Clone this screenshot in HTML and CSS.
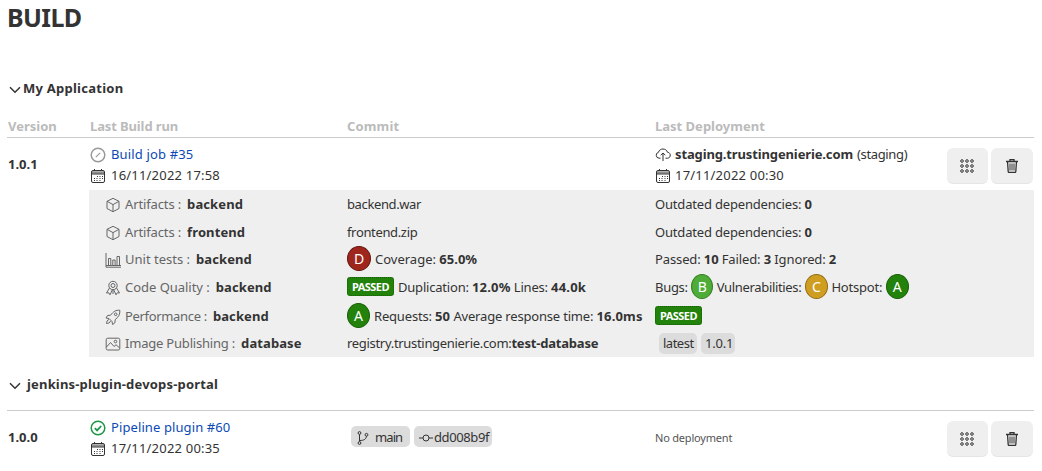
FILE: index.html
```html
<!DOCTYPE html>
<html lang="en">
<head>
<meta charset="utf-8">
<title>Build</title>
<link rel="stylesheet" href="styles.css">
</head>
<body>
<svg class="sprite" aria-hidden="true">
  <symbol id="chevron" viewBox="0 0 12 8"><path d="M1 1.2l5 5 5-5" stroke-width="1.5"/></symbol>
  <symbol id="calendar" viewBox="0 0 16 16"><rect x="1.500" y="2.500" width="13" height="12" rx="1.500"/><path d="M2 4.500h12" stroke-width="2.400" opacity=".55"/><path d="M4.500 1v2M11.500 1v2M1.500 6h13"/><path d="M7 8.500h1M9.500 8.500h1M12 8.500h1M4 10.500h1M6.500 10.500h1M9.500 10.500h1M12 10.500h1M4 12.500h1M6.500 12.500h1M9.500 12.500h1" stroke-width="1.100"/></symbol>
  <symbol id="pending" viewBox="0 0 16 16"><circle cx="8" cy="8" r="6.800" stroke-width="1.500"/><path d="M5.800 10.200l4.400-4.400" stroke-width="1.200"/></symbol>
  <symbol id="success" viewBox="0 0 16 16"><circle cx="8" cy="8" r="6.800" stroke-width="1.500"/><path d="M4.800 8.200l2.300 2.200 4.100-4.400" stroke-width="1.800"/></symbol>
  <symbol id="cube" viewBox="0 0 16 16"><path d="M8 1.300l6 3v7.200l-6 3.200-6-3.200V4.300zM2 4.300l6 3.300 6-3.300M8 7.600v7"/></symbol>
  <symbol id="chart" viewBox="0 0 16 16"><path d="M1 1v14.200h15M1 13.500h15" /><path d="M3.500 13V6.500h2.300V13M7.800 13V8h2.300v5M12 13V4.500h2.500V13"/></symbol>
  <symbol id="award" viewBox="0 0 16 16"><circle cx="8" cy="5.500" r="4.200"/><circle cx="8" cy="5.500" r="2"/><path d="M4.500 8l-3 5 2.300-.2 1.200 2 2.300-5M11.500 8l3 5-2.300-.2-1.200 2-2.300-5M8 10v4"/></symbol>
  <symbol id="rocket" viewBox="0 0 16 16"><path d="M14.800 1.200c-4-.2-6.500 1.300-9.200 5L2.500 6.500 1 9l3 .5L7 12.500l.6 3 2.300-1.700.3-3.200c3.500-2.700 5-5.400 4.600-9.400zM4 10.500c-2 .5-2.200 2.200-2.500 4 2-.2 3.600-.7 4-2.500"/><circle cx="10.700" cy="5.300" r="1.300"/></symbol>
  <symbol id="image" viewBox="0 0 16 16"><rect x="1.200" y="2.200" width="13.600" height="11.800" rx="1.500"/><path d="M1.500 11l4-4.500 3.500 4 2-1.800 3.600 3.300"/><circle cx="10.500" cy="5.500" r="1.300"/></symbol>
  <symbol id="cloud" viewBox="0 0 16 14"><path d="M5.500 10.200H4A3 3 0 0 1 3.500 4.300C4 2 6 1 8 1s4 1.200 4.400 3.200c3.800.1 3.800 6 .1 6h-2M8 13V5M5.700 7.200L8 5l2.300 2.200"/></symbol>
  <symbol id="grid" viewBox="0 0 14 14"><circle cx="2" cy="2" r="1.300"/><circle cx="7" cy="2" r="1.300"/><circle cx="12" cy="2" r="1.300"/><circle cx="2" cy="7" r="1.300"/><circle cx="7" cy="7" r="1.300"/><circle cx="12" cy="7" r="1.300"/><circle cx="2" cy="12" r="1.300"/><circle cx="7" cy="12" r="1.300"/><circle cx="12" cy="12" r="1.300"/></symbol>
  <symbol id="trash" viewBox="0 0 12 14"><path d="M0 2.500h12M4 2V.7h4V2M1.500 2.500l.7 10q.1 1 1 1h5.600q.9 0 1-1l.7-10" stroke-width="1.300"/><path d="M4 4.500v7M6 4.500v7M8 4.500v7" stroke-width="1"/></symbol>
  <symbol id="branch" viewBox="0 0 12 14"><circle cx="2.500" cy="2" r="1.400"/><circle cx="2.500" cy="12" r="1.400"/><circle cx="9.500" cy="3.800" r="1.400"/><path d="M2.500 3.500v7M2.500 9.500c5 0 6.500-1.500 7-4.200"/></symbol>
  <symbol id="commit" viewBox="0 0 14 10"><circle cx="7" cy="5" r="3"/><path d="M0 5h4M10 5h4"/></symbol>
</svg>
<main class="page">
  <h1 class="title">BUILD</h1>

  <section class="app">
    <h2 class="app-name"><svg class="chevron"><use href="#chevron"/></svg><span class="t-app">My Application</span></h2>
    <div class="columns head">
      <span class="h-version">Version</span><span class="h-build">Last Build run</span><span class="h-commit">Commit</span><span class="h-deploy">Last Deployment</span>
    </div>
    <div class="columns run">
      <b class="version">1.0.1</b>
      <div class="lines">
        <div class="line"><svg class="icon pending"><use href="#pending"/></svg><a class="link t-job">Build job #35</a></div>
        <div class="line"><svg class="icon"><use href="#calendar"/></svg><span class="date">16/11/2022 17:58</span></div>
      </div>
      <div></div>
      <div class="lines deploy">
        <div class="line"><svg class="icon cloud"><use href="#cloud"/></svg><b class="t-host">staging.trustingenierie.com</b><span class="t-env">(staging)</span></div>
        <div class="line"><svg class="icon"><use href="#calendar"/></svg><span class="date">17/11/2022 00:30</span></div>
      </div>
      <div class="actions"><button class="button"><svg class="grid"><use href="#grid"/></svg></button><button class="button"><svg class="trash"><use href="#trash"/></svg></button></div>
    </div>
    <div class="details">
      <div class="detail">
        <div class="kind"><svg class="icon"><use href="#cube"/></svg><span class="t-art">Artifacts :</span><b class="t-name">backend</b></div>
        <div class="cell t-war">backend.war</div>
        <div class="cell"><span class="t-out">Outdated dependencies: <b>0</b></span></div>
      </div>
      <div class="detail">
        <div class="kind"><svg class="icon"><use href="#cube"/></svg><span class="t-art">Artifacts :</span><b class="t-name">frontend</b></div>
        <div class="cell t-zip">frontend.zip</div>
        <div class="cell"><span class="t-out">Outdated dependencies: <b>0</b></span></div>
      </div>
      <div class="detail tests">
        <div class="kind"><svg class="icon"><use href="#chart"/></svg><span class="t-unit">Unit tests :</span><b class="t-name">backend</b></div>
        <div class="cell"><i class="grade grade-d">D</i><span class="t-cov">Coverage: <b>65.0%</b></span></div>
        <div class="cell"><span class="t-tests">Passed: <b>10</b> Failed: <b>3</b> Ignored: <b>2</b></span></div>
      </div>
      <div class="detail quality">
        <div class="kind"><svg class="icon"><use href="#award"/></svg><span class="t-quality">Code Quality :</span><b class="t-name">backend</b></div>
        <div class="cell"><span class="passed">PASSED</span><span class="t-dup">Duplication: <b>12.0%</b> Lines: <b>44.0k</b></span></div>
        <div class="cell ratings"><span class="t-bugs">Bugs:</span><i class="grade grade-b">B</i><span class="t-vuln">Vulnerabilities:</span><i class="grade grade-c">C</i><span class="t-hot">Hotspot:</span><i class="grade grade-a">A</i></div>
      </div>
      <div class="detail performance">
        <div class="kind"><svg class="icon"><use href="#rocket"/></svg><span class="t-perf">Performance :</span><b class="t-name">backend</b></div>
        <div class="cell"><i class="grade grade-a">A</i><span class="t-req">Requests: <b>50</b> Average response time: <b>16.0ms</b></span></div>
        <div class="cell"><span class="passed">PASSED</span></div>
      </div>
      <div class="detail publishing">
        <div class="kind"><svg class="icon"><use href="#image"/></svg><span class="t-image">Image Publishing :</span><b class="t-name">database</b></div>
        <div class="cell"><span class="t-reg">registry.trustingenierie.com:<b>test-database</b></span></div>
        <div class="cell tags"><span class="tag tag-latest">latest</span><span class="tag tag-number">1.0.1</span></div>
      </div>
    </div>
  </section>

  <section class="app second">
    <h2 class="app-name wide"><svg class="chevron"><use href="#chevron"/></svg><span class="t-plugin">jenkins-plugin-devops-portal</span></h2>
    <div class="columns run ruled">
      <b class="version">1.0.0</b>
      <div class="lines">
        <div class="line"><svg class="icon success"><use href="#success"/></svg><a class="link t-pipe">Pipeline plugin #60</a></div>
        <div class="line"><svg class="icon"><use href="#calendar"/></svg><span class="date">17/11/2022 00:35</span></div>
      </div>
      <div class="tags refs"><span class="tag tag-main"><svg class="branch"><use href="#branch"/></svg>main</span><span class="tag tag-commit"><svg class="commit"><use href="#commit"/></svg>dd008b9f</span></div>
      <div class="none">No deployment</div>
      <div class="actions"><button class="button"><svg class="grid"><use href="#grid"/></svg></button><button class="button"><svg class="trash"><use href="#trash"/></svg></button></div>
    </div>
  </section>
</main>
</body>
</html>
```

FILE: styles.css
```css
* { box-sizing: border-box; }
body { margin: 0; background: #fff; color: #333; font: 13px/20px "Noto Sans", "Open Sans", sans-serif; overflow: hidden; }
svg { fill: none; stroke: currentColor; flex: none; }
.sprite { display: none; }
.page { width: 1034px; padding-left: 8px; white-space: nowrap; }
.title { margin: 0 0 0 -1px; height: 76px; font-size: 25px; line-height: 35px; letter-spacing: -.6px; }
.app-name { margin: 0; height: 24px; display: flex; align-items: center; gap: 2px; padding-left: 1px; font-size: 13px; }
.app-name.wide { gap: 6px; }
.chevron { width: 12px; height: 8px; margin-top: 3px; }
.columns { display: grid; grid-template-columns: 82px 257px 308px 292px 87px; }
.head { height: 38px; padding-top: 16px; border-bottom: 1px solid #ccc; color: #bbb; font-weight: 700; margin-left: -1px; padding-left: 1px; }
.run { height: 52px; }
.second { padding-top: 15px; }
.ruled { height: 61px; margin: 14px 0 0 -1px; padding-left: 1px; border-top: 1px solid #ccc; }
.version { padding-top: 16px; }
.lines { padding-top: 5px; }
.line { height: 21px; display: flex; align-items: center; gap: 5px; }
.deploy .line { gap: 4px; }
.icon { width: 16px; height: 16px; }
.line .icon { margin-top: 2px; }
.link { color: #0b4ab5; }
.line .pending { color: #999; }
.line .success { color: #1e9647; margin-top: 3px; }
.actions { display: flex; gap: 3px; padding-top: 10px; }
.button { width: 41px; height: 36px; padding: 0; display: grid; place-items: center; border: 0; border-bottom: 1px solid #e5e5e5; border-radius: 6px; background: #efefef; color: #333; }
.button + .button { width: 42px; }
.grid { width: 14px; height: 14px; margin-right: 1px; }
.trash { width: 12px; height: 14px; }

.details { height: 167px; margin-left: 81px; padding-left: 16px; display: flex; flex-direction: column; background: #efefef; }
.detail { height: 28px; flex: none; display: grid; grid-template-columns: 242px 308px 1fr; }
.tests { height: 25px; }
.quality { height: 31px; }
.performance { height: 27px; }
.kind { display: flex; align-items: center; color: #666; gap: 4px; }
.kind .icon { margin-top: 2px; }
.kind b { color: #333; margin-left: 2px; }
.cell { display: flex; align-items: center; gap: 4px; }
.ratings { gap: 3.5px; }
.grade { width: 24px; height: 25px; border-radius: 50%; border: 1px solid; text-align: center; font-style: normal; font-size: 14px; line-height: 23px; flex: none; }
.grade-a { width: 23px; background: #23820b; border-color: #175f05; }
.grade-b { width: 22px; background: #4fac38; border-color: #35801f; }
.grade-c { width: 23px; background: #cf9e20; border-color: #916c12; }
.grade-d { background: #9f261c; border-color: #641610; }
.grade, .passed { color: #fff; }
.passed { width: 47px; height: 19px; border: 1px dotted #176105; border-radius: 3px; background: #23820b; font-size: 11px; font-weight: 700; line-height: 17px; letter-spacing: -.55px; text-align: center; }
.tags { display: flex; align-items: center; gap: 4px; padding-left: 4px; }
.tag { height: 21px; padding: 0 4px; border-radius: 5px; background: #dcdcdc; display: flex; align-items: center; }
.refs { height: 51px; }
.branch { width: 12px; height: 14px; margin-top: 3px; }
.commit { width: 14px; height: 10px; margin-top: 3px; }
.tag-main { width: 59px; gap: 6px; padding-left: 6px; letter-spacing: -.9px; }
.tag-commit { width: 78px; gap: 1px; padding-left: 5px; letter-spacing: -.4px; }
.tag-latest { width: 38px; letter-spacing: -.5px; }
.tag-number { width: 34px; letter-spacing: -.2px; }
.none { padding-top: 17px; font-size: 11px; color: #555; letter-spacing: -.2px; }

/* Tracking per label */
.t-app { letter-spacing: .25px; }
.t-plugin { letter-spacing: .18px; }
.h-build { letter-spacing: -.12px; }
.h-commit { letter-spacing: .15px; }
.t-job { letter-spacing: .15px; }
.t-pipe { letter-spacing: .1px; }
.date { letter-spacing: .2px; }
.t-host { letter-spacing: -.13px; }
.t-env { letter-spacing: -.35px; }
.t-art { letter-spacing: -.13px; }
.t-unit { letter-spacing: 0; }
.t-quality { letter-spacing: -.03px; }
.t-perf { letter-spacing: -.33px; }
.t-image { letter-spacing: -.2px; }
.t-name { letter-spacing: .1px; }
.t-war { letter-spacing: -.38px; }
.t-zip { letter-spacing: -.35px; }
.t-out { letter-spacing: -.18px; }
.t-tests { letter-spacing: -.12px; }
.t-dup { letter-spacing: -.2px; }
.t-dup b { letter-spacing: .2px; }
.t-bugs { letter-spacing: -.3px; }
.t-vuln { letter-spacing: -.33px; }
.t-hot { letter-spacing: -.2px; }
.t-req { letter-spacing: -.18px; }
.t-req b { letter-spacing: .15px; }
.t-reg { letter-spacing: -.31px; }
.t-reg b { letter-spacing: -.2px; }
```
